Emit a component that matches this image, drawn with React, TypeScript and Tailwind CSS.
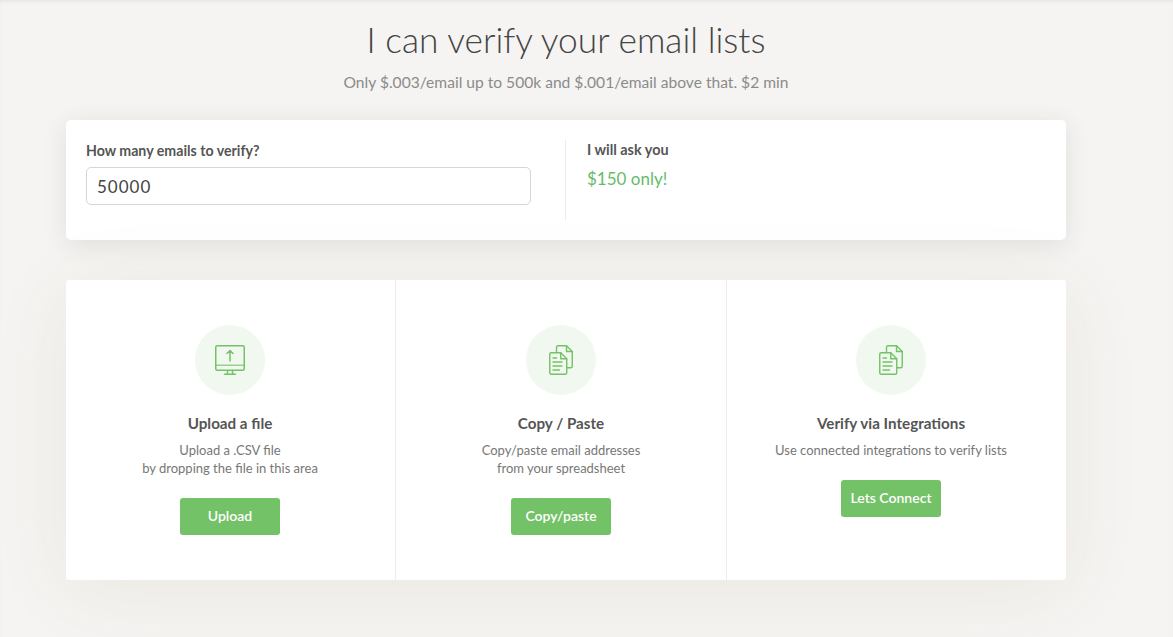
import React from "react";

function MonitorIcon() {
  return (
    <svg width="30" height="30" viewBox="0 0 30 30" fill="none" stroke="#74c267" strokeWidth="1.5" strokeLinecap="round" strokeLinejoin="round">
      <rect x="0.75" y="0.75" width="28.5" height="24.5" rx="1.5" />
      <path d="M1 20.250h28" strokeOpacity="0.7" />
      <path d="M15 16V5.500M12 8.500l3-3 3 3" />
      <path d="M12.500 25.500v3.500M17.500 25.500v3.500M9.500 29.250h11" />
    </svg>
  );
}

function DocsIcon() {
  return (
    <svg width="24" height="30" viewBox="0 0 24 30" fill="none" stroke="#74c267" strokeWidth="1.4" strokeLinecap="round" strokeLinejoin="round">
      <path d="M7.500 7V2.250A1.500 1.500 0 0 1 9 .750h8.500l5.750 5.750v14.750a1.500 1.500 0 0 1-1.500 1.500H18" />
      <path d="M17.500 .750v5.750h5.750" />
      <path d="M2.250 7.750h9.500l6 6v14a1.500 1.500 0 0 1-1.500 1.500h-14a1.500 1.500 0 0 1-1.500-1.500v-18.500a1.500 1.500 0 0 1 1.500-1.500z" />
      <path d="M11.750 7.750v6h6" />
      <path d="M4 13h3.500M4 17h9M4 21h9M4 25h6.500" />
    </svg>
  );
}

function Option({ icon, title, lines, button, width }: { icon: React.ReactNode; title: string; lines: string[]; button: string; width: string }) {
  return (
    <div className={`flex flex-col items-center pt-[45px] ${width}`}>
      <div className="flex h-[70px] w-[70px] items-center justify-center rounded-full bg-[#f1f8ef]">{icon}</div>
      <h3 className="mt-[19px] text-[15.200px] leading-[18px] font-bold text-[#555]">{title}</h3>
      <div className="mt-[9px] text-center text-[13px] leading-[18px] text-[#777]">
        {lines.map((line) => (
          <p key={line}>{line}</p>
        ))}
      </div>
      <button className="mt-[21px] h-[37px] w-[100px] rounded-[3px] bg-[#74c267] pb-[2px] text-[14px] font-semibold text-white">{button}</button>
    </div>
  );
}

export default function App() {
  return (
    <div className="min-h-[637px] bg-[#f5f4f2] font-['Lato','Liberation_Sans',sans-serif] shadow-[inset_0_3px_4px_-2px_rgba(0,0,0,0.08)]">
      <div className="ml-[66px] w-[1000px] pt-[18px]">
        <h1 className="text-center text-[35.300px] leading-[43px] font-light text-[#444]">I can verify your email lists</h1>
        <p className="mt-[11px] text-center text-[15.600px] leading-[20px] text-[#8b8b8b]">Only $.003/email up to 500k and $.001/email above that. $2 min</p>

        <div className="mt-[28px] flex h-[120px] rounded-[5px] bg-white py-[20px] shadow-[0_4px_24px_rgba(60,50,40,0.10)]">
          <div className="w-[500px] border-r border-[#ececea] pl-[20px]">
            <label className="block pt-[1px] text-[14.200px] leading-[20px] font-bold text-[#555]">How many emails to verify?</label>
            <input
              readOnly
              value="50000"
              className="mt-[6px] block h-[38px] w-[445px] rounded-[5px] border border-[#d9d5d2] px-[10px] text-[17px] tracking-[1px] text-[#444] outline-none"
            />
          </div>
          <div className="pl-[21px]">
            <div className="text-[14.400px] leading-[20px] font-bold text-[#555]">I will ask you</div>
            <div className="mt-[8px] text-[17px] leading-[22px] text-[#66bb6a]">$150 only!</div>
          </div>
        </div>

        <div className="mt-[40px] flex h-[300px] rounded-[3px] bg-white shadow-[0_10px_80px_rgba(130,85,40,0.08)]">
          <Option width="w-[330px] border-r border-[#ececea] pr-[1px]" icon={<MonitorIcon />} title="Upload a file" lines={["Upload a .CSV file", "by dropping the file in this area"]} button="Upload" />
          <Option width="w-[331px] border-r border-[#ececea]" icon={<DocsIcon />} title="Copy / Paste" lines={["Copy/paste email addresses", "from your spreadsheet"]} button="Copy/paste" />
          <Option width="w-[328px]" icon={<DocsIcon />} title="Verify via Integrations" lines={["Use connected integrations to verify lists"]} button="Lets Connect" />
        </div>
      </div>
    </div>
  );
}
